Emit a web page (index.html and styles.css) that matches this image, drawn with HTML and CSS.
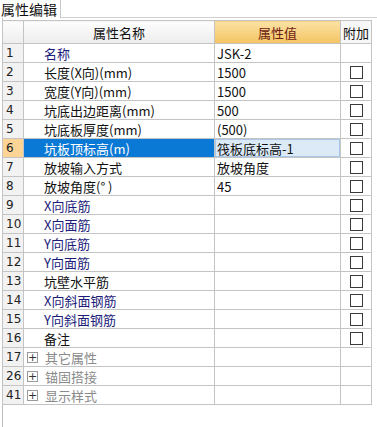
FILE: index.html
```html
<!DOCTYPE html>
<html lang="zh-CN">
<head>
    <meta charset="UTF-8" />
    <title>属性编辑</title>
    <link rel="stylesheet" href="styles.css">
</head>
<body>
    <div class="tab-bar">
        <div class="tab active">属性编辑</div>
        <div class="tab-fill"></div>
    </div>

    <div class="panel">
        <table class="prop-grid">
            <colgroup>
                <col class="c-num" />
                <col class="c-name" />
                <col class="c-val" />
                <col class="c-add" />
            </colgroup>
            <thead>
                <tr>
                    <th class="num"></th>
                    <th class="h-name">属性名称</th>
                    <th class="h-val">属性值</th>
                    <th class="h-add">附加</th>
                </tr>
            </thead>
            <tbody>
                <tr><td class="num">1</td><td class="name blue">名称</td><td class="val">JSK-2</td><td class="add"></td></tr>
                <tr><td class="num">2</td><td class="name">长度(X向)(mm)</td><td class="val">1500</td><td class="add"><span class="chk"></span></td></tr>
                <tr><td class="num">3</td><td class="name">宽度(Y向)(mm)</td><td class="val">1500</td><td class="add"><span class="chk"></span></td></tr>
                <tr><td class="num">4</td><td class="name">坑底出边距离(mm)</td><td class="val">500</td><td class="add"><span class="chk"></span></td></tr>
                <tr><td class="num">5</td><td class="name">坑底板厚度(mm)</td><td class="val">(500)</td><td class="add"><span class="chk"></span></td></tr>
                <tr class="selected"><td class="num">6</td><td class="name">坑板顶标高(m)</td><td class="val">筏板底标高-1</td><td class="add"><span class="chk"></span></td></tr>
                <tr><td class="num">7</td><td class="name">放坡输入方式</td><td class="val">放坡角度</td><td class="add"><span class="chk"></span></td></tr>
                <tr><td class="num">8</td><td class="name">放坡角度(° )</td><td class="val">45</td><td class="add"><span class="chk"></span></td></tr>
                <tr><td class="num">9</td><td class="name blue">X向底筋</td><td class="val"></td><td class="add"><span class="chk"></span></td></tr>
                <tr><td class="num">10</td><td class="name blue">X向面筋</td><td class="val"></td><td class="add"><span class="chk"></span></td></tr>
                <tr><td class="num">11</td><td class="name blue">Y向底筋</td><td class="val"></td><td class="add"><span class="chk"></span></td></tr>
                <tr><td class="num">12</td><td class="name blue">Y向面筋</td><td class="val"></td><td class="add"><span class="chk"></span></td></tr>
                <tr><td class="num">13</td><td class="name">坑壁水平筋</td><td class="val"></td><td class="add"><span class="chk"></span></td></tr>
                <tr><td class="num">14</td><td class="name blue">X向斜面钢筋</td><td class="val"></td><td class="add"><span class="chk"></span></td></tr>
                <tr><td class="num">15</td><td class="name blue">Y向斜面钢筋</td><td class="val"></td><td class="add"><span class="chk"></span></td></tr>
                <tr><td class="num">16</td><td class="name">备注</td><td class="val"></td><td class="add"><span class="chk"></span></td></tr>
                <tr class="group"><td class="num">17</td><td class="name"><span class="plus">+</span>其它属性</td><td class="val"></td><td class="add"></td></tr>
                <tr class="group"><td class="num">26</td><td class="name"><span class="plus">+</span>锚固搭接</td><td class="val"></td><td class="add"></td></tr>
                <tr class="group"><td class="num">41</td><td class="name"><span class="plus">+</span>显示样式</td><td class="val"></td><td class="add"></td></tr>
            </tbody>
        </table>
    </div>
</body>
</html>
```

FILE: styles.css
```css
* {
    box-sizing: border-box;
}

body {
    margin: 0;
    background: #FFFFFF;
    font-family: "Noto Sans CJK SC", "Liberation Sans", sans-serif;
    font-size: 13px;
    color: #111111;
    height: 427px;
    overflow: hidden;
}

/* 顶部标签 */
.tab-bar {
    display: flex;
    height: 18px;
}

.tab {
    width: 61px;
    padding: 2px 0 0 1px;
    font-size: 14px;
    line-height: 15px;
    border-right: 1px solid #C9C9C9;
    background: #FFFFFF;
}

.tab-fill {
    flex: 1;
    border-bottom: 1px solid #CFCFCF;
}

/* 属性表格 */
.panel {
    margin-left: 2px;
    padding-top: 2px;
    border-left: 1px solid #BDBDBD;
    height: 409px;
}

.prop-grid {
    border-collapse: collapse;
    table-layout: fixed;
    width: 369px;
    margin-left: -1px;
}

.c-num { width: 21px; }
.c-name { width: 191px; }
.c-val { width: 126px; }
.c-add { width: 31px; }

.prop-grid th,
.prop-grid td {
    border: 1px solid #C4C4C4;
    padding: 0;
    white-space: nowrap;
    overflow: hidden;
}

.prop-grid th {
    height: 23px;
    font-weight: normal;
    font-size: 13px;
    background: linear-gradient(#FDFDFD, #EDEDED);
}

    .prop-grid th.h-val {
        background: linear-gradient(#FBE2A4, #F4C462);
        color: #6E1A12;
    }

    .prop-grid th.h-add {
        background: #F7F7F7;
    }

.prop-grid td {
    height: 19px;
    line-height: 17px;
}

    .prop-grid td.num {
        background: #F2F2F2;
        padding-left: 3px;
        font-size: 12px;
        font-family: "DejaVu Sans", sans-serif;
        color: #222222;
    }

    .prop-grid td.name {
        padding-left: 20px;
    }

        .prop-grid td.name.blue {
            color: #1C1C7A;
        }

    .prop-grid td.val {
        padding-left: 2px;
    }

    .prop-grid td.add {
        text-align: center;
    }

.chk {
    display: inline-block;
    width: 13px;
    height: 13px;
    border: 1px solid #3A3A3A;
    background: #FFFFFF;
    vertical-align: middle;
    margin-top: -2px;
}

/* 选中行 */
.selected td.num {
    background: #FCD596;
}

.selected td.name {
    background: #0A79D6;
    color: #FFFFFF;
}

.selected td.val {
    background: #DCEAF8;
    box-shadow: inset 0 0 0 1px #A9C7E8;
}

/* 折叠分组 */
.group td.name {
    padding-left: 3px;
    color: #8A8A8A;
}

.plus {
    display: inline-block;
    width: 11px;
    height: 11px;
    margin-right: 7px;
    border: 1px solid #9A9A9A;
    color: #333333;
    font-family: "DejaVu Sans", sans-serif;
    font-size: 11px;
    line-height: 9px;
    text-align: center;
    vertical-align: middle;
    margin-top: -2px;
}
```
